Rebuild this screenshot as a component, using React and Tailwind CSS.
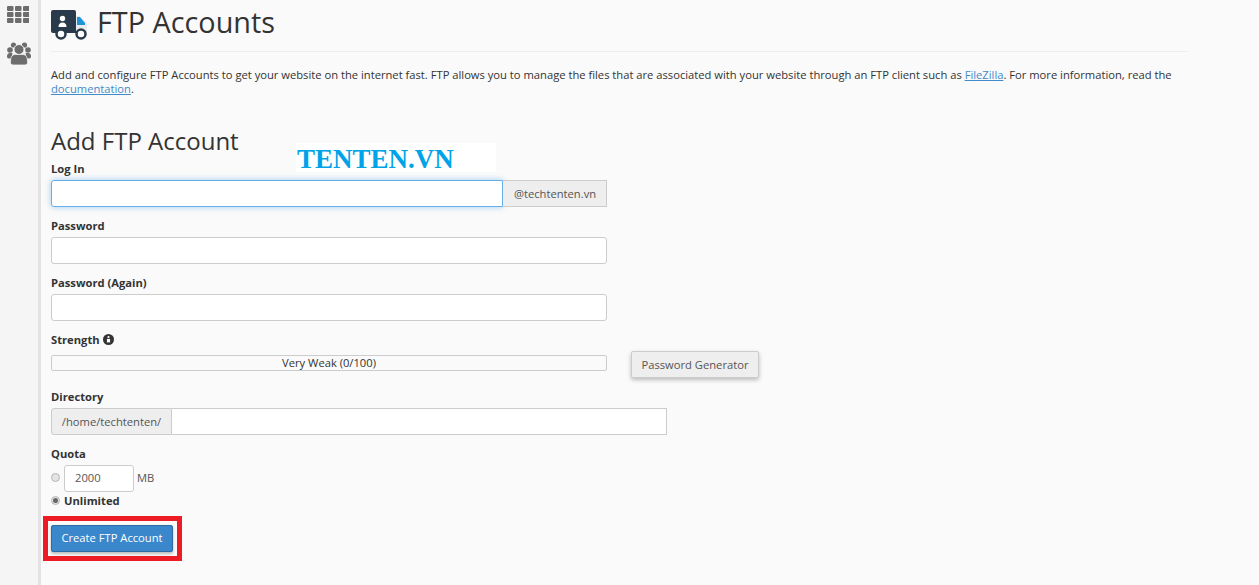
import React from 'react';

const GridIcon = () => (
  <svg width="22" height="18" viewBox="0 0 22 18" fill="#6d6d6d">
    {[0, 6, 12].map(y => [0, 8, 16].map(x => (
      <rect key={`${x}-${y}`} x={x} y={y} width="6.5" height="5" rx="1" />
    )))}
  </svg>
);

const UsersIcon = () => (
  <svg width="24" height="23" viewBox="0 0 24 23" fill="#6d6d6d">
    <circle cx="6.500" cy="3" r="2.600" />
    <circle cx="17.500" cy="3" r="2.600" />
    <circle cx="3" cy="8" r="2.800" />
    <circle cx="21" cy="8" r="2.800" />
    <path d="M0 14.500c0-2 1-3.500 3-3.500h2.500c-.5 1-.5 3-.5 5.500H2c-1.300 0-2-.7-2-2z" />
    <path d="M24 14.500c0-2-1-3.500-3-3.500h-2.500c.5 1 .5 3 .5 5.500h3c1.300 0 2-.7 2-2z" />
    <circle cx="12" cy="7.500" r="5" stroke="#f5f5f5" strokeWidth="1" />
    <path d="M3.500 20.500c0-6 1.500-8 5-8h7c3.500 0 5 2 5 8 0 1.500-1 2.500-2.500 2.500H6c-1.500 0-2.500-1-2.500-2.500z" stroke="#f5f5f5" strokeWidth="0.800" />
  </svg>
);

const TruckIcon = () => (
  <svg width="38" height="30" viewBox="0 0 38 30">
    <path d="M2 0h21a2 2 0 0 1 2 2v21H2a2 2 0 0 1-2-2V2a2 2 0 0 1 2-2z" fill="#293a4a" />
    <path d="M25 6h4l7 7v11H25z" fill="#e9ecee" />
    <path d="M26 7h3l5 6v2h-8z" fill="#1b95d8" />
    <circle cx="11.500" cy="8.500" r="2.700" fill="#fff" />
    <path d="M7.500 17c0-3 1.500-4.500 4-4.500s4 1.500 4 4.500z" fill="#fff" />
    <circle cx="10" cy="24" r="4.500" fill="#fff" stroke="#293a4a" strokeWidth="2.500" />
    <circle cx="30" cy="24" r="4.500" fill="#fff" stroke="#293a4a" strokeWidth="2.500" />
  </svg>
);

const InfoIcon = () => (
  <svg width="11" height="11" viewBox="0 0 11 11">
    <circle cx="5.500" cy="5.500" r="5.500" fill="#333" />
    <circle cx="5.500" cy="3" r="1.100" fill="#fff" />
    <rect x="3.900" y="4.900" width="3.200" height="3.500" fill="#fff" />
  </svg>
);

const Radio = ({ checked }) => (
  <span className="flex h-[9px] w-[9px] items-center justify-center rounded-full border border-[#b5b5b5] bg-[#e4e4e4]">
    {checked && <span className="h-[5px] w-[5px] rounded-full bg-[#666]" />}
  </span>
);

const Field = ({ label, children }) => (
  <div className="mb-3">
    <div className="flex h-[18px] items-start text-[11.2px] leading-[13px] font-bold text-[#333]">{label}</div>
    {children}
  </div>
);

const TextBox = () => <div className="h-[27px] w-[556px] rounded-[3px] border border-[#ccc] bg-white" />;

export default function App() {
  return (
    <div className="flex min-h-[585px] bg-[#fafafa] font-['Open_Sans',sans-serif] text-[#333]">
      <aside className="flex w-[41px] shrink-0 flex-col items-start gap-[17px] border-r-[3px] border-[#e3e3e3] bg-[#f5f5f5] pt-[6px] pl-[7px]">
        <GridIcon />
        <span className="block pt-[1px]"><UsersIcon /></span>
      </aside>

      <main className="relative w-[1147px] pl-[10px]">
        <div className="flex h-[52px] items-start gap-[8px] border-b border-[#eee] pt-[10px]">
          <TruckIcon />
          <h1 className="mt-[-10px] text-[28.8px] leading-[44px] font-normal text-[#333]">FTP Accounts</h1>
        </div>

        <p className="mt-4 text-[11.2px] leading-[14px] text-[#333]">
          Add and configure FTP Accounts to get your website on the internet fast. FTP allows you to manage the files that are associated with your website through an FTP client such as <a className="text-[#428bca] underline">FileZilla</a>. For more information, read the <a className="text-[#428bca] underline">documentation</a>.
        </p>

        <h2 className="mt-[28px] h-[38px] text-[24px] leading-[33px] font-normal text-[#333]">Add FTP Account</h2>

        <div className="absolute top-[143px] left-[255px] h-[29px] w-[200px] bg-white pl-[1px] font-['Liberation_Serif',serif] text-[27px] leading-[32px] font-bold text-[#00a3e8]">TENTEN.VN</div>

        <Field label="Log In">
          <div className="flex w-[556px]">
            <div className="h-[27px] w-[452px] rounded-l-[3px] border border-[#66afe9] bg-white shadow-[0_0_6px_rgba(102,175,233,0.6)]" />
            <div className="flex h-[27px] flex-1 items-center justify-center border border-l-0 border-[#ccc] bg-[#eee] pt-[1px] pl-[1px] text-[11.2px] text-[#555]">@techtenten.vn</div>
          </div>
        </Field>

        <Field label="Password">
          <TextBox />
        </Field>

        <Field label="Password (Again)">
          <TextBox />
        </Field>

        <div className="flex">
          <div className="w-[580px]">
            <div className="flex h-[22px] items-start gap-[3px] text-[11.2px] leading-[13px] font-bold"><span>Strength</span><span className="pt-[1px]"><InfoIcon /></span></div>
            <div className="h-[16px] w-[556px] rounded-[2px] border border-[#ccc] bg-[#fafafa] text-center text-[11.2px] leading-[14px] text-[#333]">Very Weak (0/100)</div>
          </div>
          <button className="mt-[18px] h-[27px] w-[128px] rounded-[2px] border border-[#ccc] bg-[#eee] pt-[1px] text-[11.2px] text-[#555] shadow-[0_2px_4px_rgba(0,0,0,0.25)]">Password Generator</button>
        </div>

        <div className="mt-[12px]">
          <Field label="Directory">
            <div className="flex w-[616px]">
              <div className="flex h-[27px] w-[121px] items-center justify-center rounded-l-[3px] border border-[#ccc] bg-[#eee] pt-[1px] text-[11.2px] text-[#555]">/home/techtenten/</div>
              <div className="h-[27px] flex-1 border border-l-0 border-[#ccc] bg-white" />
            </div>
          </Field>
        </div>

        <div className="flex h-[18px] items-start text-[11.2px] leading-[13px] font-bold">Quota</div>
        <div className="flex h-[27px] items-center">
          <span className="mt-[-3px] w-[13px]"><Radio /></span>
          <div className="flex h-[27px] w-[70px] items-center rounded-[3px] border border-[#ccc] bg-white pl-[10px] text-[11.2px] text-[#555]">2000</div>
          <span className="ml-[3px] text-[11.2px] text-[#555]">MB</span>
        </div>
        <div className="mt-[1px] flex h-[17px] items-center text-[11.2px] font-bold">
          <span className="mt-[-3px] w-[13px]"><Radio checked /></span>
          <span>Unlimited</span>
        </div>

        <div className="mt-[6px] ml-[-8px] inline-block border-[5px] border-[#ed1c24] pt-[4px] pr-[4px] pb-[4px] pl-[3px]">
          <button className="block h-[27px] w-[122px] rounded-[2px] border border-[#2e6da4] bg-[#3a87cc] text-[11.2px] text-white shadow-[0_2px_3px_rgba(0,0,0,0.25)]">Create FTP Account</button>
        </div>
      </main>
    </div>
  );
}
